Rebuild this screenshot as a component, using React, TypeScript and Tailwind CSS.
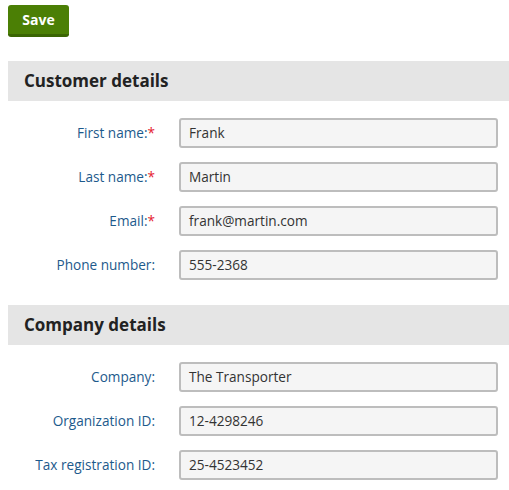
import React from "react";

type Field = { label: string; value: string; required?: boolean };

const customer: Field[] = [
  { label: "First name:", value: "Frank", required: true },
  { label: "Last name:", value: "Martin", required: true },
  { label: "Email:", value: "frank@martin.com", required: true },
  { label: "Phone number:", value: "555-2368" },
];

const company: Field[] = [
  { label: "Company:", value: "The Transporter" },
  { label: "Organization ID:", value: "12-4298246" },
  { label: "Tax registration ID:", value: "25-4523452" },
];

function Row({ f }: { f: Field }) {
  return (
    <div className="flex items-center h-[30px]">
      <div className="w-[147px] text-right text-[13.6px] text-[#1d5a8c] leading-none">
        {f.label}
        {f.required && <span className="text-[#e5202e]">*</span>}
      </div>
      <div className="ml-[24px] w-[319px] h-[30px] border-2 border-[#bdbdbd] rounded-[3px] bg-[#f5f5f5] flex items-center pl-[8px] text-[13.6px] text-[#333]">
        {f.value}
      </div>
    </div>
  );
}

function Section({ title, fields }: { title: string; fields: Field[] }) {
  return (
    <div>
      <div className="h-[40px] bg-[#e5e5e5] flex items-center pl-[16px] text-[17px] font-bold text-[#222]">
        {title}
      </div>
      <div className="flex flex-col gap-[14px] pt-[17px]">
        {fields.map((f) => (
          <Row key={f.label} f={f} />
        ))}
      </div>
    </div>
  );
}

export default function App() {
  return (
    <div
      className="w-[509px] h-[490px] bg-white pl-[8px] pt-[5px] overflow-hidden"
      style={{ fontFamily: "'Open Sans', sans-serif" }}
    >
      <button className="w-[61px] h-[32px] bg-[#4b7f05] border-b-[3px] border-[#3a6503] rounded-[3px] text-white font-bold text-[14px] flex items-center justify-center">
        Save
      </button>
      <div className="mt-[24px] flex flex-col gap-[25px]">
        <Section title="Customer details" fields={customer} />
        <Section title="Company details" fields={company} />
      </div>
    </div>
  );
}
